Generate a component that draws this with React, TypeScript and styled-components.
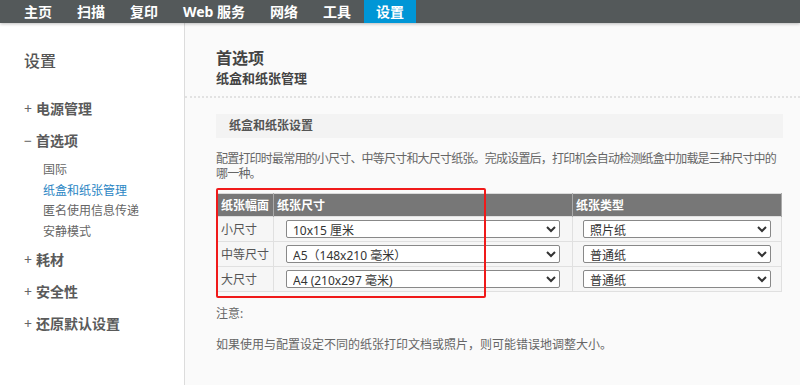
import * as React from 'react'
import styled, { createGlobalStyle } from 'styled-components'

const GlobalStyle = createGlobalStyle`
  html, body {
    margin: 0;
    padding: 0;
    background: #fafafa;
    font-family: "Noto Sans", "Noto Sans CJK SC", sans-serif;
  }
`

const tabs = ['主页', '扫描', '复印', 'Web 服务', '网络', '工具', '设置']

const sizes = [
  { label: '小尺寸', size: '10x15 厘米', type: '照片纸' },
  { label: '中等尺寸', size: 'A5（148x210 毫米）', type: '普通纸' },
  { label: '大尺寸', size: 'A4 (210x297 毫米)', type: '普通纸' },
]

export default function App() {
  return (
    <>
      <GlobalStyle />
      <Page>
        <NavBar>
          {tabs.map((t) => (
            <Tab key={t} $active={t === '设置'}>
              {t}
            </Tab>
          ))}
        </NavBar>
        <Body>
          <Sidebar>
            <SideTitle>设置</SideTitle>
            <Group>
              <GroupHead>
                <Sign>+</Sign>电源管理
              </GroupHead>
            </Group>
            <Group>
              <GroupHead>
                <Sign>−</Sign>首选项
              </GroupHead>
              <SubList>
                <SubItem>国际</SubItem>
                <SubItem $active>纸盒和纸张管理</SubItem>
                <SubItem>匿名使用信息传递</SubItem>
                <SubItem>安静模式</SubItem>
              </SubList>
            </Group>
            <Group>
              <GroupHead>
                <Sign>+</Sign>耗材
              </GroupHead>
            </Group>
            <Group>
              <GroupHead>
                <Sign>+</Sign>安全性
              </GroupHead>
            </Group>
            <Group>
              <GroupHead>
                <Sign>+</Sign>还原默认设置
              </GroupHead>
            </Group>
          </Sidebar>
          <Main>
            <PageHeader>
              <h1>首选项</h1>
              <h2>纸盒和纸张管理</h2>
            </PageHeader>
            <Content>
              <SectionBar>纸盒和纸张设置</SectionBar>
              <Desc>
                配置打印时最常用的小尺寸、中等尺寸和大尺寸纸张。完成设置后，打印机会自动检测纸盒中加载是三种尺寸中的哪一种。
              </Desc>
              <TableWrap>
                <Table>
                  <colgroup>
                    <col style={{ width: 56 }} />
                    <col />
                    <col style={{ width: 209 }} />
                  </colgroup>
                  <thead>
                    <tr>
                      <Th>纸张幅面</Th>
                      <Th>纸张尺寸</Th>
                      <Th>纸张类型</Th>
                    </tr>
                  </thead>
                  <tbody>
                    {sizes.map((r) => (
                      <tr key={r.label}>
                        <Td>{r.label}</Td>
                        <Td $pad={12}>
                          <Select defaultValue={r.size}>
                            <option>{r.size}</option>
                          </Select>
                        </Td>
                        <Td $pad={10}>
                          <Select defaultValue={r.type}>
                            <option>{r.type}</option>
                          </Select>
                        </Td>
                      </tr>
                    ))}
                  </tbody>
                </Table>
                <Highlight />
              </TableWrap>
              <Note>注意:</Note>
              <Note>如果使用与配置设定不同的纸张打印文档或照片，则可能错误地调整大小。</Note>
            </Content>
          </Main>
        </Body>
      </Page>
    </>
  )
}

const Page = styled.div`
  width: 800px;
  height: 385px;
  overflow: hidden;
  display: flex;
  flex-direction: column;
`

const NavBar = styled.nav`
  display: flex;
  height: 23px;
  padding-left: 12px;
  background: #54595a;
  box-shadow: 0 1px 3px rgba(0, 0, 0, 0.25);
  position: relative;
  z-index: 1;
`

const Tab = styled.div<{ $active?: boolean }>`
  padding: 0 12px;
  margin-right: 1px;
  line-height: 23px;
  font-size: 14px;
  font-weight: 700;
  color: #fff;
  background: ${(p) => (p.$active ? '#0096d6' : 'transparent')};
`

const Body = styled.div`
  flex: 1;
  display: flex;
`

const Sidebar = styled.aside`
  width: 185px;
  flex-shrink: 0;
  background: #fff;
  border-right: 1px solid #dcdcdc;
  padding: 25px 0 0 24px;
  box-sizing: border-box;
  color: #555;
`

const SideTitle = styled.div`
  font-size: 16px;
  font-weight: 500;
  color: #555;
  margin-bottom: 26px;
`

const Group = styled.div`
  margin-bottom: 11px;
`

const GroupHead = styled.div`
  font-size: 14px;
  font-weight: 700;
  line-height: 21px;
  color: #5a5a5a;
`

const Sign = styled.span`
  display: inline-block;
  width: 12px;
  font-weight: 400;
  color: #666;
`

const SubList = styled.div`
  padding: 9px 0 0 19px;
  margin-bottom: -4px;
`

const SubItem = styled.div<{ $active?: boolean }>`
  font-size: 12px;
  line-height: 20.5px;
  color: ${(p) => (p.$active ? '#2a86c4' : '#666')};
`

const Main = styled.main`
  flex: 1;
  background: #fafafa;
`

const PageHeader = styled.div`
  padding: 25px 0 8px 31px;
  border-bottom: 2px dotted #e2e2e2;
  color: #444;

  & > h1 {
    margin: 0;
    font-size: 16px;
    font-weight: 700;
    line-height: 20px;
  }

  & > h2 {
    margin: 0;
    font-size: 13px;
    font-weight: 700;
    line-height: 20px;
  }
`

const Content = styled.div`
  padding: 16px 17px 0 31px;
`

const SectionBar = styled.div`
  background: #f3f3f3;
  height: 24px;
  line-height: 24px;
  padding-left: 13px;
  font-size: 12px;
  font-weight: 700;
  color: #555;
`

const Desc = styled.p`
  margin: 13px 0 12px;
  font-size: 12px;
  line-height: 15px;
  letter-spacing: -0.8px;
  color: #666;
`

const TableWrap = styled.div`
  position: relative;
  padding: 0 1px;
`

const Table = styled.table`
  width: 100%;
  border-collapse: collapse;
  border: 1px solid #dadada;
  font-size: 12px;
  table-layout: fixed;
`

const Th = styled.th`
  background: #777;
  color: #fff;
  text-align: left;
  font-weight: 700;
  height: 22px;
  padding: 0 3px;
  border-right: 1px solid #aaa;
`

const Td = styled.td<{ $pad?: number }>`
  height: 24px;
  padding: 0 ${(p) => (p.$pad ? `${p.$pad}px` : '3px')};
  border: 1px solid #e0e0e0;
  color: #555;
  background: #f6f6f6;
`

const Select = styled.select`
  width: 100%;
  height: 18px;
  font-family: "Noto Sans", "Noto Sans CJK SC", sans-serif;
  font-size: 12px;
  color: #333;
  background: #fff;
  border: 1px solid #888;
  border-radius: 2px;
  padding: 0 2px;
`

const Highlight = styled.div`
  position: absolute;
  left: 0;
  top: -5px;
  width: 266px;
  height: 106px;
  border: 2px solid #f01a1a;
  border-radius: 2px;
  pointer-events: none;
`

const Note = styled.p`
  margin: 14px 0 0;
  font-size: 12px;
  line-height: 16px;
  color: #666;
  & + & {
    margin-top: 15px;
  }
`
